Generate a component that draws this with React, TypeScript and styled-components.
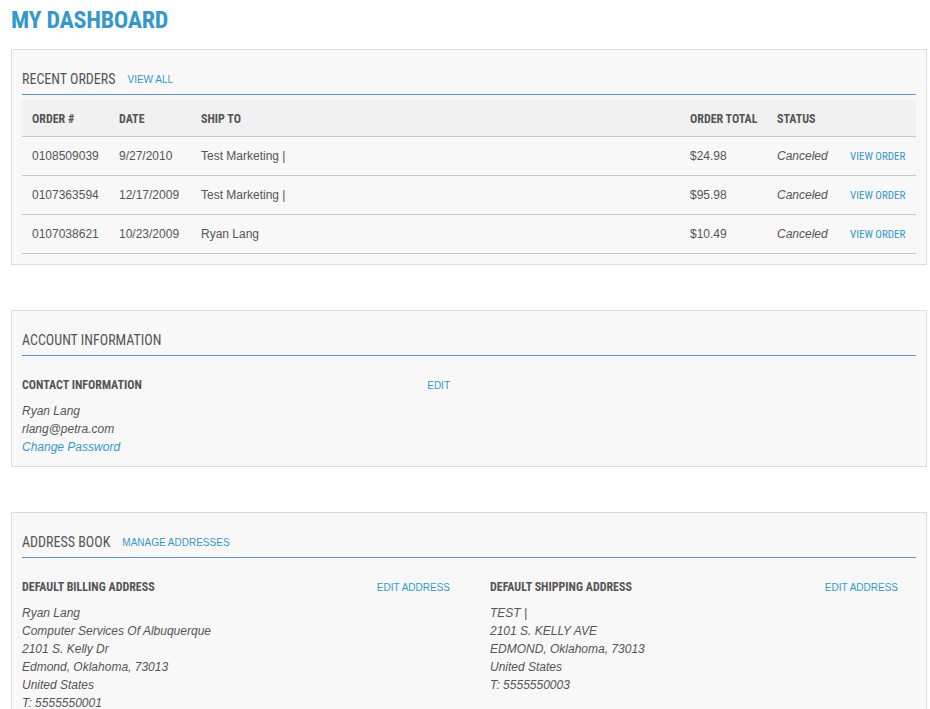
import React from "react";
import styled, { createGlobalStyle } from "styled-components";

const Global = createGlobalStyle`
  html, body { margin: 0; padding: 0; background: #fff; }
  body { font-family: "Liberation Sans", Arial, sans-serif; font-size: 12px; color: #555; }
  * { box-sizing: border-box; }
`;

const COND = `"Roboto Condensed", "DejaVu Sans Condensed", "Liberation Sans Narrow", "Arial Narrow", sans-serif`;

const Page = styled.div`
  padding: 0 3px 40px 11px;
`;

const Title = styled.h1`
  margin: 0;
  padding-top: 6px;
  height: 49px;
  font-family: ${COND};
  font-stretch: condensed;
  font-weight: 700;
  font-size: 24px;
  line-height: 28px;
  color: #3399cc;
  letter-spacing: -0.3px;
`;

const Box = styled.section<{ $gap?: boolean }>`
  border: 1px solid #dcdcdc;
  background: #f8f8f8;
  padding: 0 10px 10px;
  margin-top: ${(p) => (p.$gap ? "45px" : "0")};
`;

const SectionHead = styled.div`
  display: flex;
  align-items: center;
  gap: 12px;
  height: 45px;
  padding: 21px 0 7px;
  border-bottom: 1px solid #5b94e0;
  line-height: 16px;
`;

const SectionTitle = styled.h2`
  margin: 0;
  font-family: ${COND};
  font-stretch: condensed;
  font-weight: 400;
  font-size: 14px;
  line-height: 16px;
  color: #555;
  text-transform: uppercase;
`;

const SmallLink = styled.a`
  font-family: "Liberation Sans", Arial, sans-serif;
  font-size: 10px;
  line-height: 16px;
  padding-top: 1px;
  color: #3399cc;
  text-decoration: none;
  text-transform: uppercase;
`;

const Table = styled.div`
  margin-top: 5px;
`;

const Row = styled.div<{ $head?: boolean }>`
  display: grid;
  grid-template-columns: 87px 82px 1fr 87px 73px 76px;
  align-items: center;
  height: ${(p) => (p.$head ? "37px" : "39px")};
  padding-top: ${(p) => (p.$head ? "1px" : "0")};
  background: ${(p) => (p.$head ? "#f1f1f1" : "transparent")};
  border-bottom: 1px solid #c8c8c8;
`;

const HeadCell = styled.div`
  padding-left: 10px;
  font-family: ${COND};
  font-stretch: condensed;
  font-weight: 700;
  font-size: 12px;
  color: #555;
`;

const Cell = styled.div<{ $italic?: boolean }>`
  padding-left: 10px;
  font-size: 12px;
  color: #555;
  font-style: ${(p) => (p.$italic ? "italic" : "normal")};
  white-space: nowrap;
`;

const OrderLink = styled.a`
  font-family: ${COND};
  font-stretch: condensed;
  font-size: 11px;
  color: #3399cc;
  text-decoration: none;
`;

const Columns = styled.div`
  display: grid;
  grid-template-columns: 428px 408px;
  column-gap: 40px;
`;

const Block = styled.div``;

const BlockHead = styled.div`
  display: flex;
  justify-content: space-between;
  align-items: center;
  margin-top: 20px;
  height: 18px;
`;

const BlockTitle = styled.h3`
  margin: 0;
  font-family: ${COND};
  font-stretch: condensed;
  font-weight: 700;
  font-size: 12px;
  color: #555;
`;

const EditLink = styled.a`
  font-size: 10px;
  color: #3399cc;
  text-decoration: none;
  text-transform: uppercase;
`;

const Lines = styled.div`
  margin-top: 8px;
  font-style: italic;
  font-size: 12px;
  line-height: 18px;
  color: #555;
`;

const Line = styled.div``;

const ItalicLink = styled.a`
  display: block;
  color: #3399cc;
  text-decoration: none;
`;

const orders = [
  { no: "0108509039", date: "9/27/2010", ship: "Test Marketing |", total: "$24.98" },
  { no: "0107363594", date: "12/17/2009", ship: "Test Marketing |", total: "$95.98" },
  { no: "0107038621", date: "10/23/2009", ship: "Ryan Lang", total: "$10.49" },
];

export default function App() {
  return (
    <Page>
      <Global />
      <Title>MY DASHBOARD</Title>

      <Box>
        <SectionHead>
          <SectionTitle>Recent Orders</SectionTitle>
          <SmallLink href="#">View All</SmallLink>
        </SectionHead>
        <Table>
          <Row $head>
            <HeadCell>ORDER #</HeadCell>
            <HeadCell>DATE</HeadCell>
            <HeadCell>SHIP TO</HeadCell>
            <HeadCell>ORDER TOTAL</HeadCell>
            <HeadCell>STATUS</HeadCell>
            <HeadCell />
          </Row>
          {orders.map((o) => (
            <Row key={o.no}>
              <Cell>{o.no}</Cell>
              <Cell>{o.date}</Cell>
              <Cell>{o.ship}</Cell>
              <Cell>{o.total}</Cell>
              <Cell $italic>Canceled</Cell>
              <Cell>
                <OrderLink href="#">VIEW ORDER</OrderLink>
              </Cell>
            </Row>
          ))}
        </Table>
      </Box>

      <Box $gap>
        <SectionHead>
          <SectionTitle>Account Information</SectionTitle>
        </SectionHead>
        <Columns>
          <Block>
            <BlockHead>
              <BlockTitle>CONTACT INFORMATION</BlockTitle>
              <EditLink href="#">Edit</EditLink>
            </BlockHead>
            <Lines>
              <Line>Ryan Lang</Line>
              <Line>rlang@petra.com</Line>
              <ItalicLink href="#">Change Password</ItalicLink>
            </Lines>
          </Block>
        </Columns>
      </Box>

      <Box $gap>
        <SectionHead>
          <SectionTitle>Address Book</SectionTitle>
          <SmallLink href="#">Manage Addresses</SmallLink>
        </SectionHead>
        <Columns>
          <Block>
            <BlockHead>
              <BlockTitle>DEFAULT BILLING ADDRESS</BlockTitle>
              <EditLink href="#">Edit Address</EditLink>
            </BlockHead>
            <Lines>
              <Line>Ryan Lang</Line>
              <Line>Computer Services Of Albuquerque</Line>
              <Line>2101 S. Kelly Dr</Line>
              <Line>Edmond, Oklahoma, 73013</Line>
              <Line>United States</Line>
              <Line>T: 5555550001</Line>
            </Lines>
          </Block>
          <Block>
            <BlockHead>
              <BlockTitle>DEFAULT SHIPPING ADDRESS</BlockTitle>
              <EditLink href="#">Edit Address</EditLink>
            </BlockHead>
            <Lines>
              <Line>TEST |</Line>
              <Line>2101 S. KELLY AVE</Line>
              <Line>EDMOND, Oklahoma, 73013</Line>
              <Line>United States</Line>
              <Line>T: 5555550003</Line>
            </Lines>
          </Block>
        </Columns>
      </Box>
    </Page>
  );
}
